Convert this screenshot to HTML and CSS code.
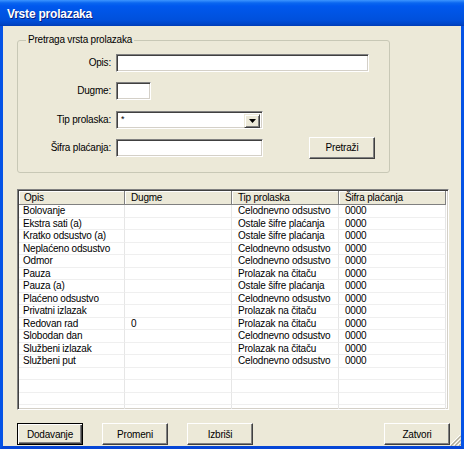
FILE: index.html
```html
<!DOCTYPE html>
<html>
<head>
<meta charset="utf-8">
<link rel="stylesheet" href="styles.css">
</head>
<body>
<div class="window">
  <div class="titlebar"><span class="title">Vrste prolazaka</span></div>
  <div class="client">
    <div class="group">
      <span class="legend">Pretraga vrsta prolazaka</span>
      <div class="form">
        <span class="lbl">Opis:</span>
        <div class="field w-opis"></div>
        <span class="lbl">Dugme:</span>
        <div class="field w-dugme"></div>
        <span class="lbl">Tip prolaska:</span>
        <div class="field combo"><span class="combo-text">*</span><span class="combo-btn"><svg width="7" height="4" viewBox="0 0 7 4"><path d="M0 0H7L3.5 4Z" fill="#000"/></svg></span></div>
        <span class="lbl">Šifra plaćanja:</span>
        <div class="last-row"><div class="field w-sifra"></div><button class="btn btn-search">Pretraži</button></div>
      </div>
    </div>

    <div class="grid">
      <div class="grow head">
        <div class="hc">Opis</div><div class="hc">Dugme</div><div class="hc">Tip prolaska</div><div class="hc">Šifra plaćanja</div>
      </div>
      <div class="grow"><div class="c">Bolovanje</div><div class="c"></div><div class="c">Celodnevno odsustvo</div><div class="c">0000</div></div>
      <div class="grow"><div class="c">Ekstra sati (a)</div><div class="c"></div><div class="c">Ostale šifre plaćanja</div><div class="c">0000</div></div>
      <div class="grow"><div class="c">Kratko odsustvo (a)</div><div class="c"></div><div class="c">Ostale šifre plaćanja</div><div class="c">0000</div></div>
      <div class="grow"><div class="c">Neplaćeno odsustvo</div><div class="c"></div><div class="c">Celodnevno odsustvo</div><div class="c">0000</div></div>
      <div class="grow"><div class="c">Odmor</div><div class="c"></div><div class="c">Celodnevno odsustvo</div><div class="c">0000</div></div>
      <div class="grow"><div class="c">Pauza</div><div class="c"></div><div class="c">Prolazak na čitaču</div><div class="c">0000</div></div>
      <div class="grow"><div class="c">Pauza (a)</div><div class="c"></div><div class="c">Ostale šifre plaćanja</div><div class="c">0000</div></div>
      <div class="grow"><div class="c">Plaćeno odsustvo</div><div class="c"></div><div class="c">Celodnevno odsustvo</div><div class="c">0000</div></div>
      <div class="grow"><div class="c">Privatni izlazak</div><div class="c"></div><div class="c">Prolazak na čitaču</div><div class="c">0000</div></div>
      <div class="grow"><div class="c">Redovan rad</div><div class="c">0</div><div class="c">Prolazak na čitaču</div><div class="c">0000</div></div>
      <div class="grow"><div class="c">Slobodan dan</div><div class="c"></div><div class="c">Celodnevno odsustvo</div><div class="c">0000</div></div>
      <div class="grow"><div class="c">Službeni izlazak</div><div class="c"></div><div class="c">Prolazak na čitaču</div><div class="c">0000</div></div>
      <div class="grow"><div class="c">Službeni put</div><div class="c"></div><div class="c">Celodnevno odsustvo</div><div class="c">0000</div></div>
      <div class="grow"><div class="c"></div><div class="c"></div><div class="c"></div><div class="c"></div></div>
      <div class="grow"><div class="c"></div><div class="c"></div><div class="c"></div><div class="c"></div></div>
      <div class="grow"><div class="c"></div><div class="c"></div><div class="c"></div><div class="c"></div></div>
      <div class="grow"><div class="c"></div><div class="c"></div><div class="c"></div><div class="c"></div></div>
    </div>

    <div class="buttons">
      <button class="btn btn-default">Dodavanje</button>
      <button class="btn btn-promeni">Promeni</button>
      <button class="btn btn-izbrisi">Izbriši</button>
      <button class="btn btn-zatvori">Zatvori</button>
    </div>

    <svg class="grip" width="12" height="12" viewBox="0 0 12 12">
      <path d="M11 1L1 11M11 5L5 11M11 9L9 11" stroke="#fff" stroke-width="1"/>
      <path d="M12 2L2 12M12 6L6 12M12 10L10 12" stroke="#ACA899" stroke-width="1.2"/>
    </svg>
  </div>
</div>
</body>
</html>
```

FILE: styles.css
```css
* { box-sizing: border-box; }
html, body {
  margin: 0;
  padding: 0;
  width: 464px;
  height: 449px;
  overflow: hidden;
  background: #ECE9D8;
}
body {
  font-family: "Liberation Sans", Arial, sans-serif;
  font-size: 10px;
  letter-spacing: -0.2px;
  color: #000;
}
.window {
  width: 464px;
  height: 449px;
  display: flex;
  flex-direction: column;
}
.titlebar {
  height: 26px;
  flex: none;
  display: flex;
  align-items: center;
  padding-left: 7px;
  background: linear-gradient(to bottom, #3D95FF 0px, #0A66F0 3px, #0058EE 6px, #0054E3 14px, #0050DC 20px, #0046C8 24px, #003CB5 26px);
}
.title {
  color: #fff;
  font-weight: bold;
  font-size: 12px;
  letter-spacing: -0.2px;
  text-shadow: 1px 1px 0 #0A1F80;
  margin-top: 1px;
}
.client {
  position: relative;
  flex: 1;
  border-left: 3px solid #0553E6;
  border-right: 3px solid #0553E6;
  border-bottom: 3px solid #0546D6;
  background: #ECE9D8;
  display: flex;
  flex-direction: column;
}
.group {
  position: relative;
  margin: 14px 0 0 14px;
  width: 373px;
  height: 133px;
  border: 1px solid #C8C8B6;
  border-radius: 3px;
  padding-top: 13px;
  flex: none;
}
.legend {
  position: absolute;
  top: -7px;
  left: 8px;
  padding: 0 2px;
  background: #ECE9D8;
  line-height: 12px;
}
.form {
  display: grid;
  grid-template-columns: 93px auto;
  grid-auto-rows: 18px;
  row-gap: 10.33px;
  column-gap: 5px;
  align-items: center;
  justify-items: start;
}
.lbl {
  justify-self: end;
  line-height: 12px;
}
.field {
  height: 18px;
  background: #fff;
  border-top: 1px solid #808080;
  border-left: 1px solid #808080;
  border-bottom: 1px solid #fff;
  border-right: 1px solid #fff;
  box-shadow: inset 1px 1px 0 #404040, inset -1px -1px 0 #D4D0C8;
}
.w-opis { width: 253px; }
.w-dugme { width: 35px; }
.w-sifra { width: 147px; }
.combo {
  width: 147px;
  display: flex;
  justify-content: space-between;
  padding: 2px;
}
.combo-text {
  line-height: 10px;
  padding-left: 2px;
  font-size: 9px;
}
.combo-btn {
  width: 16px;
  height: 14px;
  background: #ECE9D8;
  border-top: 1px solid #ECE9D8;
  border-left: 1px solid #ECE9D8;
  border-right: 1px solid #404040;
  border-bottom: 1px solid #404040;
  box-shadow: inset 1px 1px 0 #fff, inset -1px -1px 0 #808080;
  display: flex;
  align-items: center;
  justify-content: center;
}
.last-row {
  display: flex;
  align-items: center;
  height: 18px;
}
.btn {
  font-family: "Liberation Sans", Arial, sans-serif;
  font-size: 10px;
  letter-spacing: -0.2px;
  color: #000;
  width: 66px;
  height: 22px;
  padding: 0;
  background: #ECE9D8;
  border-top: 1px solid #fff;
  border-left: 1px solid #fff;
  border-right: 1px solid #404040;
  border-bottom: 1px solid #404040;
  box-shadow: inset -1px -1px 0 #808080;
  flex: none;
}
.btn-search {
  margin-left: 46px;
}
.btn-default {
  border: 1px solid #000;
  box-shadow: inset 1px 1px 0 #fff, inset -1px -1px 0 #404040, inset -2px -2px 0 #808080;
}
.grid {
  margin: 16px 0 0 14px;
  width: 432px;
  height: 221px;
  flex: none;
  background: #fff;
  border-top: 1px solid #808080;
  border-left: 1px solid #808080;
  border-bottom: 1px solid #fff;
  border-right: 1px solid #fff;
  box-shadow: inset 1px 1px 0 #404040, inset -1px -1px 0 #D4D0C8;
  padding: 1px;
  overflow: hidden;
}
.grow {
  display: grid;
  grid-template-columns: 106px 107px 107px 107px;
  height: 12.5px;
}
.grow.head {
  height: 14px;
}
.hc {
  background: #ECE9D8;
  border-right: 1px solid #808080;
  border-bottom: 1px solid #808080;
  box-shadow: inset 1px 1px 0 #fff;
  padding-left: 6px;
  line-height: 13px;
  white-space: nowrap;
  overflow: hidden;
}
.hc:first-child {
  padding-left: 5px;
}
.c {
  border-right: 1px solid #E6E6E6;
  border-bottom: 1px solid #EFEFEF;
  padding-left: 6px;
  line-height: 12px;
  white-space: nowrap;
  overflow: hidden;
}
.c:first-child {
  padding-left: 4px;
}
.buttons {
  display: flex;
  margin-top: 13px;
  padding-left: 14px;
  padding-right: 11px;
  flex: none;
}
.btn-promeni { margin-left: 19px; }
.btn-izbrisi { margin-left: 19px; }
.btn-zatvori { margin-left: auto; }
.grip {
  position: absolute;
  right: 0;
  bottom: 0;
}
```
